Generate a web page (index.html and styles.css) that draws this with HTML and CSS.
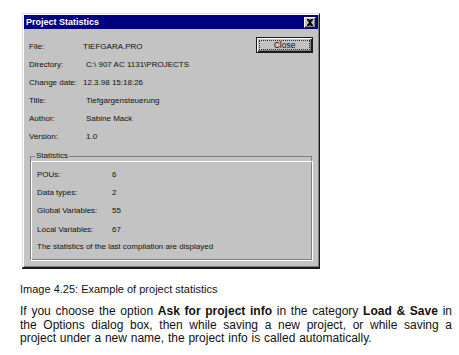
FILE: index.html
```html
<!DOCTYPE html>
<html lang="en">
<head>
  <meta charset="UTF-8" />
  <title>Project Statistics</title>
  <link rel="stylesheet" href="styles.css">
</head>
<body>
  <div class="page">
    <div class="dialog">
      <div class="titlebar">
        <span class="title">Project Statistics</span>
        <span class="close-box">
          <svg width="8" height="7" viewBox="0 0 8 7">
            <path d="M1 0h2l1 1 1-1h2v1l-2 2.5 2 2.5v1h-2l-1-1-1 1h-2v-1l2-2.5-2-2.5z" fill="#000"/>
          </svg>
        </span>
      </div>
      <div class="dialog-body">
        <div class="top">
          <dl class="info">
            <dt>File:</dt><dd>TIEFGARA.PRO</dd>
            <dt>Directory:</dt><dd class="shifted">C:\ 907 AC 1131\PROJECTS</dd>
            <dt>Change date:</dt><dd>12.3.98 15:18:26</dd>
            <dt>Title:</dt><dd class="shifted">Tiefgargensteuerung</dd>
            <dt>Author:</dt><dd class="shifted">Sabine Mack</dd>
            <dt>Version:</dt><dd class="shifted">1.0</dd>
          </dl>
          <button class="btn-close"><span>Close</span></button>
        </div>
        <fieldset class="stats">
          <legend>Statistics</legend>
          <dl class="stat-list">
            <dt>POUs:</dt><dd>6</dd>
            <dt>Data types:</dt><dd>2</dd>
            <dt>Global Variables:</dt><dd>55</dd>
            <dt>Local Variables:</dt><dd>67</dd>
          </dl>
          <p class="note">The statistics of the last compilation are displayed</p>
        </fieldset>
      </div>
    </div>

    <p class="caption">Image 4.25: Example of project statistics</p>

    <p class="text">If you choose the option <b>Ask for project info</b> in the category <b>Load &amp; Save</b> in the Options dialog box, then while saving a new project, or while saving a project under a new name, the project info is called automatically.</p>
  </div>
</body>
</html>
```

FILE: styles.css
```css
:root {
  --face: #c3c3c3;
  --shadow: #808080;
  --dark: #1a1a1a;
  --title: #000080;
}

* {
  box-sizing: border-box;
}

body {
  margin: 0;
  background: #fff;
  color: #111;
  font-family: "Liberation Sans", Arial, sans-serif;
}

.page {
  padding: 13px 0 0 20px;
  width: 454px;
}

/* the dialog window */
.dialog {
  margin-left: 2px;
  width: 298px;
  background: var(--face);
  border: 1px solid;
  border-color: #dcdcdc var(--dark) var(--dark) #dcdcdc;
  box-shadow: inset 1px 1px #fff, inset -1px -1px var(--shadow), 0 1px var(--dark);
  padding: 1px 1px 7px;
  font-size: 8px;
  color: #111;
}

.titlebar {
  display: flex;
  align-items: center;
  justify-content: space-between;
  height: 14px;
  background: var(--title);
  padding: 0 2px 0 2px;
}

.title {
  color: #fff;
  font-weight: bold;
  font-size: 9px;
}

.close-box {
  display: flex;
  align-items: center;
  justify-content: center;
  width: 12px;
  height: 11px;
  background: var(--face);
  border: 1px solid;
  border-color: #fff var(--dark) var(--dark) #fff;
  box-shadow: inset -1px -1px var(--shadow);
}

.dialog-body {
  padding: 8px 5px 0 5px;
}

.top {
  display: flex;
  justify-content: space-between;
  align-items: flex-start;
}

.info {
  display: grid;
  grid-template-columns: 54px auto;
  grid-auto-rows: 18px;
  align-items: center;
  margin: 0;
}

.info dt,
.info dd,
.stat-list dt,
.stat-list dd {
  margin: 0;
  white-space: nowrap;
}

.info dd.shifted {
  padding-left: 3px;
}

.btn-close {
  width: 57px;
  height: 16px;
  padding: 2px;
  background: var(--face);
  border: 1px solid var(--dark);
  box-shadow: inset 1px 1px #fff, inset -1px -1px var(--dark), inset -2px -2px var(--shadow);
  font: inherit;
  font-size: 8.5px;
  color: #111;
  display: flex;
}

.btn-close span {
  flex: 1;
  border: 1px dotted #333;
  line-height: 8px;
}

/* group box */
.stats {
  position: relative;
  margin: 6px 1px 0 1px;
  padding: 4px 6px 3px 6px;
  border: 1px solid var(--shadow);
  width: 282px;
}

.stats::before {
  content: "";
  position: absolute;
  top: 0;
  left: 0;
  right: -2px;
  bottom: -2px;
  border: 1px solid #fff;
}

.stats legend {
  position: relative;
  z-index: 1;
  padding: 0 1px;
  margin-left: -2px;
  background: var(--face);
  line-height: 10px;
}

.stat-list {
  display: grid;
  grid-template-columns: 75px auto;
  grid-auto-rows: 18.3px;
  align-items: center;
  margin: 0;
}

.note {
  margin: 0;
  height: 18px;
  line-height: 18px;
}

.caption {
  margin: 14px 0 0;
  font-size: 11px;
  line-height: 14px;
}

.text {
  margin: 9px 0 0;
  font-size: 12px;
  line-height: 13.5px;
  word-spacing: 0.5px;
  text-align: justify;
  width: 432px;
}
```
